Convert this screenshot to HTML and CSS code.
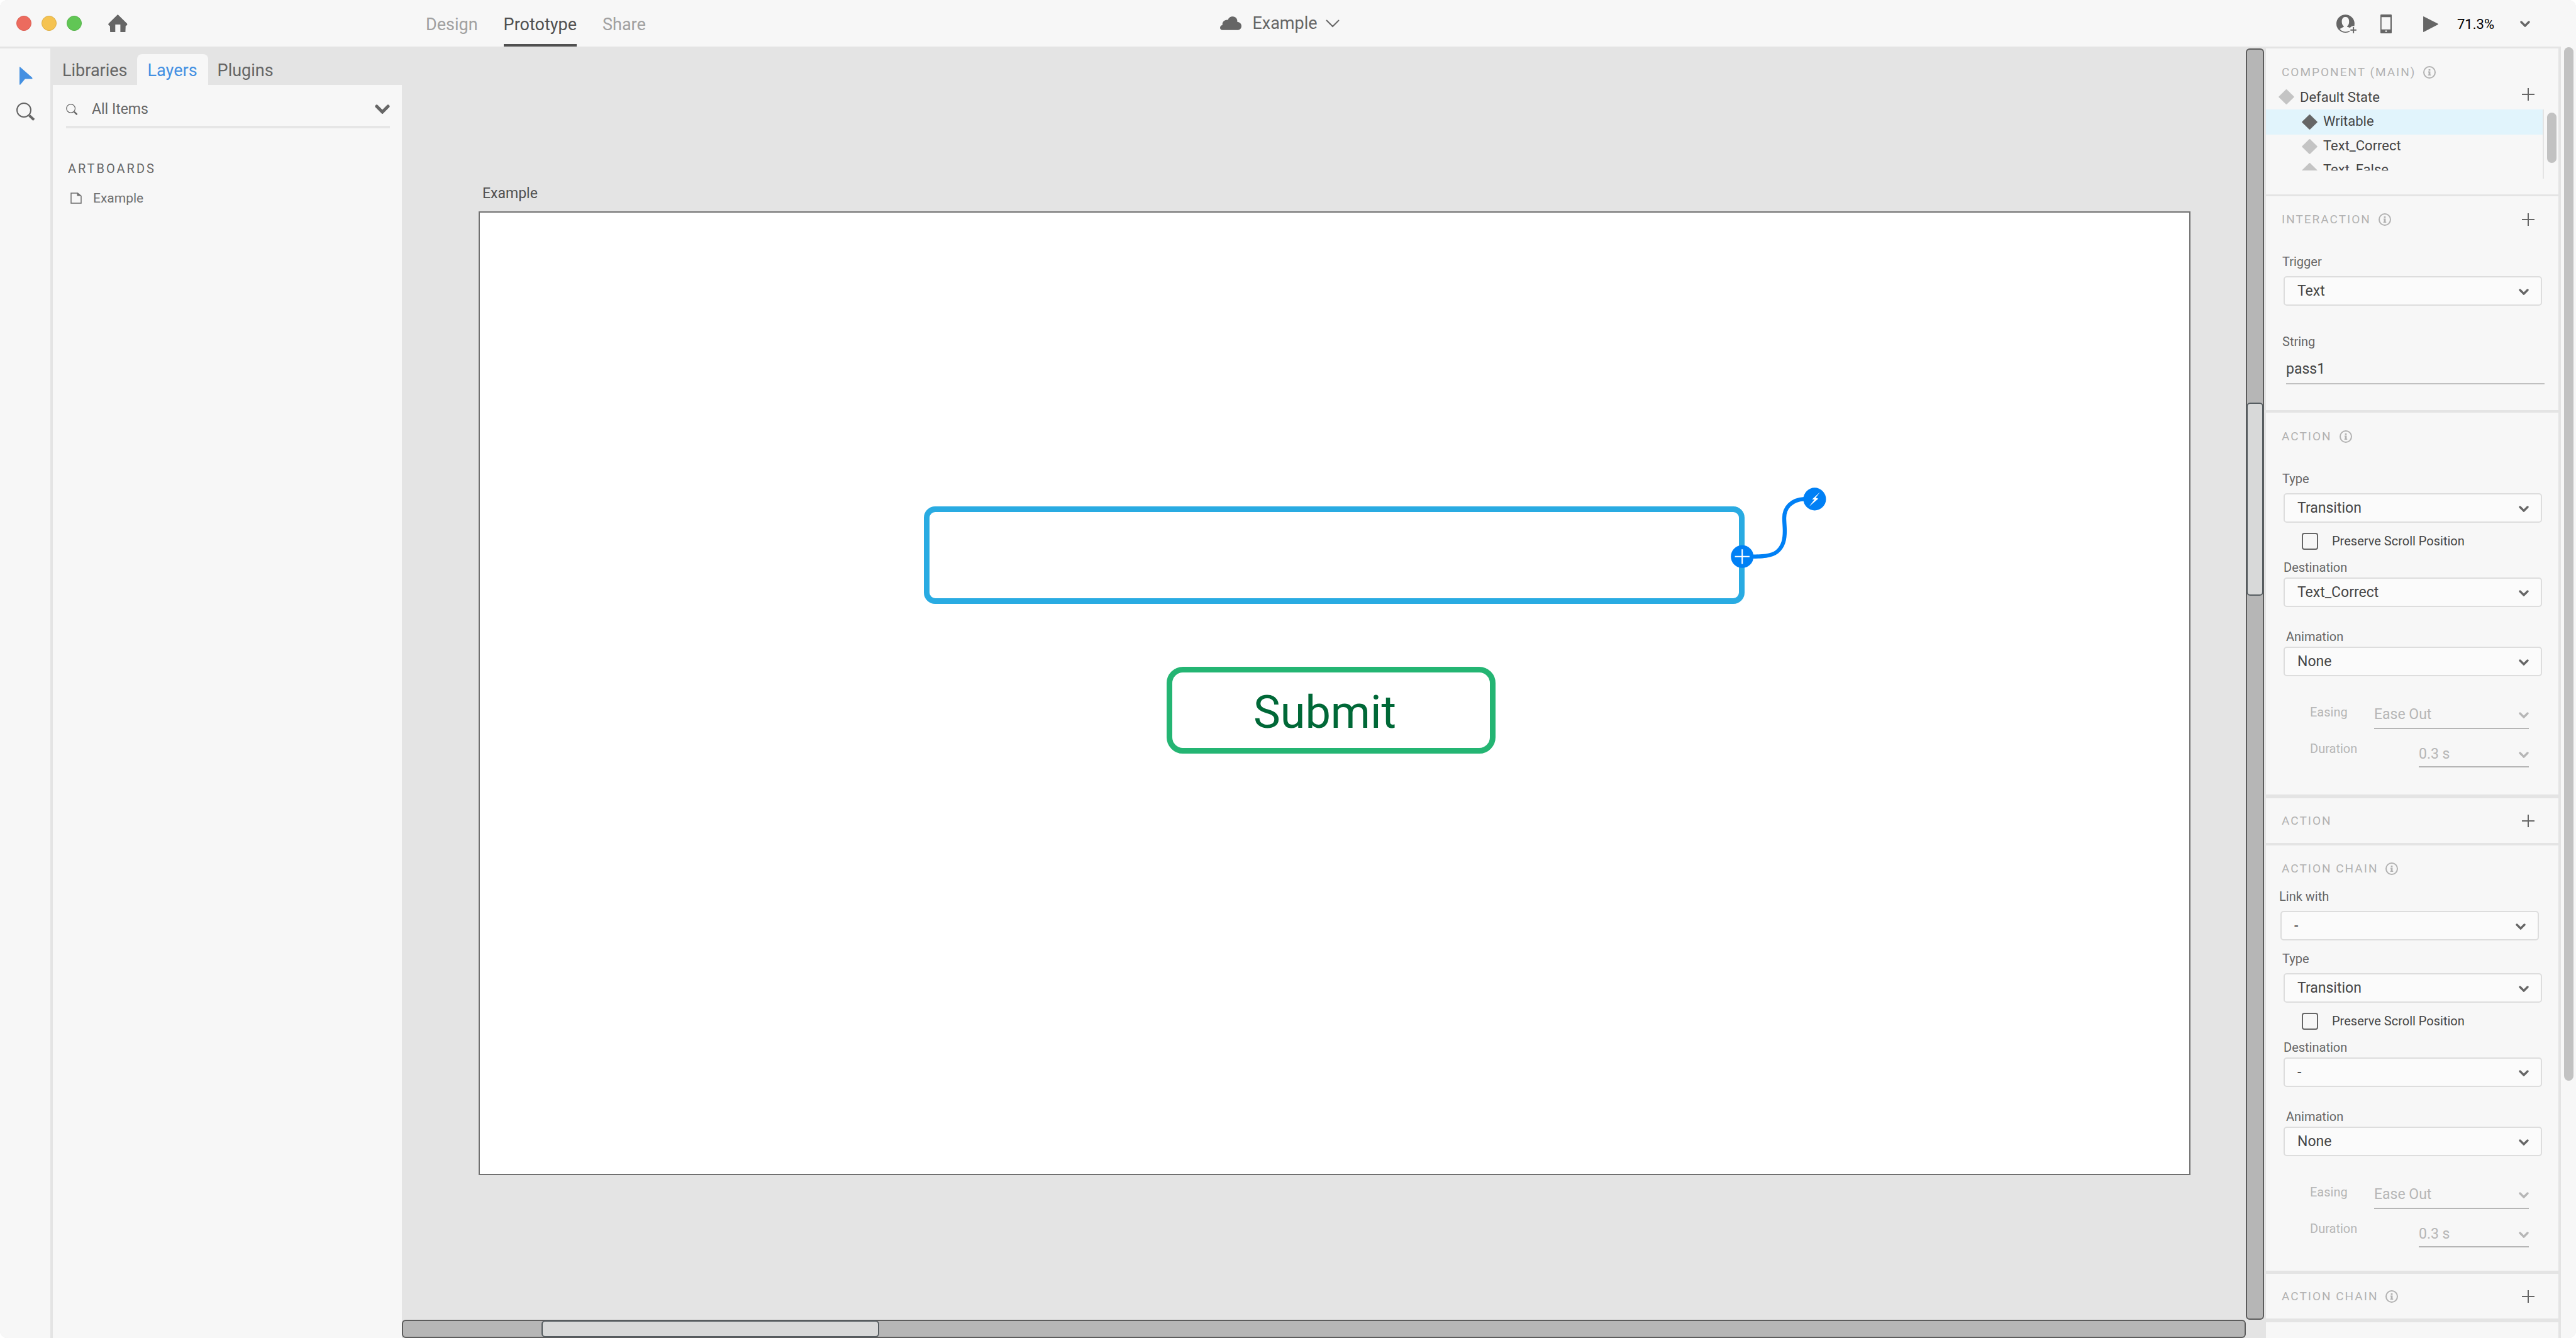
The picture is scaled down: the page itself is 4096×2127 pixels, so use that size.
FILE: index.html
```html
<!DOCTYPE html>
<html lang="en">
<head>
<meta charset="utf-8">
<title>Example</title>
<link rel="stylesheet" href="styles.css">
</head>
<body>
<svg class="sprite" aria-hidden="true">
  <symbol id="i-search" viewBox="0 0 30 29"><circle cx="12" cy="12" r="11" fill="none" stroke="currentColor" stroke-width="2"/><path d="M20.500 20.500 28 27.500" stroke="currentColor" stroke-width="4" fill="none"/></symbol>
  <symbol id="i-chevron" viewBox="0 0 16 10"><path d="M2 2 8 8 14 2" fill="none" stroke="currentColor" stroke-width="3.400" stroke-linecap="round"/></symbol>
  <symbol id="i-chevron-thin" viewBox="0 0 22 13"><path d="M1.500 1.500 11 11 20.500 1.500" fill="none" stroke="currentColor" stroke-width="2" stroke-linecap="round"/></symbol>
  <symbol id="i-plus" viewBox="0 0 20 20"><path d="M10 0V20M0 10H20" fill="none" stroke="currentColor" stroke-width="2"/></symbol>
  <symbol id="i-diamond" viewBox="0 0 25 24"><path d="M11.600.4q.9-.8 1.800 0L24.400 11.200q.8.800 0 1.600L13.400 23.600q-.9.800-1.800 0L.6 12.800q-.8-.8 0-1.600z" fill="currentColor"/></symbol>
  <symbol id="i-info" viewBox="0 0 20 20"><circle cx="10" cy="10" r="9" fill="none" stroke="currentColor" stroke-width="2"/><path d="M8.600 5h2.800v2.400H8.600zM8 8.600h3.400v4.800h.9V15H7.700v-1.600h.9V10.200H8z" fill="currentColor"/></symbol>
</svg>

<div class="app">
  <header class="topbar">
    <div class="topbar-left">
      <div class="window-controls">
        <button class="dot dot-close" aria-label="Close"></button>
        <button class="dot dot-min" aria-label="Minimize"></button>
        <button class="dot dot-max" aria-label="Zoom"></button>
        <button class="icon-btn home" aria-label="Home"><svg width="31" height="28" viewBox="0 0 31 28"><path fill="currentColor" d="M15.300 0 29.800 14.300Q31 15.600 29.800 16.900 28.900 17.800 27.800 17.900L27.400 28H19.400V16H11.300V28H3.200L2.800 17.900Q1.700 17.800.8 16.900-.4 15.600.8 14.300Z"/></svg></button>
      </div>
      <nav class="modes">
        <a href="#design">Design</a>
        <a href="#prototype" class="active">Prototype</a>
        <a href="#share">Share</a>
      </nav>
    </div>
    <button class="doc-title">
      <svg width="34" height="22" viewBox="192 147 193 123"><path fill="currentColor" d="M211 270C199 269 192 259 192 248 192 236 201 226 214 226 208 198 232 174 264 178 268 158 285 147 307 147 333 147 350 167 348 197 368 197 385 212 385 233 385 255 371 270 348 270Z"/></svg>
      <span>Example</span>
      <svg class="caret" width="22" height="13"><use href="#i-chevron-thin"/></svg>
    </button>
    <div class="tools">
      <button class="icon-btn" aria-label="Invite"><svg width="32" height="30" viewBox="68 46 182 170"><circle cx="150" cy="129" r="82" fill="currentColor"/><path class="cut" d="M150 69C128 69 117 84 117 111 117 131 125 144 135 151V157L99 176C115 196 132 202 150 202 170 202 186 196 204 180L196 168 165 157V151C176 144 183 131 183 111 183 84 172 69 150 69Z"/><circle class="cut" cx="222" cy="187" r="37"/><path fill="currentColor" d="M217 159h11v22h21v11h-21v23h-11v-23h-22v-11h22z"/></svg></button>
      <button class="icon-btn phone" aria-label="Device preview"><svg width="18" height="30" viewBox="464 42 103 171"><rect x="464" y="42" width="103" height="171" rx="7" fill="currentColor"/><path class="cut" d="M474 66h81v111h-81zM509 188h13v13h-13z"/></svg></button>
      <button class="icon-btn play" aria-label="Play"><svg width="24" height="25" viewBox="853 58 133 139"><path fill="currentColor" d="M853 63q0-6 5-4L984 124q4 3 0 6L858 196q-5 2-5-3Z"/></svg></button>
      <button class="zoom">71.3% <svg width="16" height="10"><use href="#i-chevron"/></svg></button>
    </div>
  </header>

  <main class="main">
    <div class="toolbar">
      <button class="icon-btn select-tool" aria-label="Select"><svg width="21" height="29" viewBox="0 0 21 29"><path fill="currentColor" d="M0 1Q0-.4 1 .6L19.800 17Q20.800 18 20.400 19.500H9.500Q8.500 19.500 8 20.500L1.400 28.400Q.2 29.400 0 28Z"/></svg></button>
      <button class="icon-btn" aria-label="Zoom tool"><svg width="30" height="29"><use href="#i-search"/></svg></button>
    </div>

    <aside class="left">
      <div class="tabs" role="tablist">
        <button role="tab">Libraries</button>
        <button role="tab" class="active" aria-selected="true">Layers</button>
        <button role="tab">Plugins</button>
      </div>
      <div class="layers">
        <div class="search">
          <svg width="19" height="18"><use href="#i-search"/></svg>
          <input type="text" value="All Items" aria-label="Filter layers">
          <button class="icon-btn" aria-label="Filter options"><svg width="24" height="15"><use href="#i-chevron"/></svg></button>
        </div>
        <h2>ARTBOARDS</h2>
        <a class="layer" href="#example"><svg width="18" height="18" viewBox="0 0 18 18"><path d="M1 1H11.500L17 5.500V17H1Z" fill="none" stroke="currentColor" stroke-width="1.500"/><path d="M10.500.5V5.500H17.500Z" fill="currentColor"/></svg>Example</a>
      </div>
    </aside>

    <section class="workspace">
      <div class="canvas">
        <span class="artboard-name">Example</span>
        <div class="artboard">
          <input class="mock-input" type="text" aria-label="Answer">
          <button class="mock-submit">Submit</button>
          <svg class="wire" width="152" height="129" viewBox="284 190 860 730">
            <path d="M480 811C560 810 650 808 700 768 760 718 770 650 770 580 770 540 765 500 765 465 765 370 830 299 945 293" fill="none" stroke="#0080f5" stroke-width="36"/>
            <circle cx="387" cy="811" r="102" fill="#0080f5"/>
            <path d="M387 746V877M321 811H453" stroke="#fff" stroke-width="12"/>
            <circle cx="1039" cy="294" r="102" fill="#0080f5"/>
            <path d="M1087 231 1015 297H1038L990 360 1072 290 1048 282Z" fill="#fff"/>
          </svg>
        </div>
      </div>
      <div class="track track-v"><div class="grip grip-v"></div></div>
      <div class="track track-h"><div class="grip grip-h"></div></div>
    </section>

    <aside class="inspector">
      <section class="panel component">
        <div class="head"><h2>COMPONENT (MAIN)</h2><svg width="20" height="20"><use href="#i-info"/></svg></div>
        <div class="state root"><svg width="25" height="24"><use href="#i-diamond"/></svg>Default State<button class="icon-btn add" aria-label="Add state"><svg width="20" height="20"><use href="#i-plus"/></svg></button></div>
        <div class="states">
          <div class="state-frame">
            <ul class="state-list">
              <li class="state current"><svg width="25" height="24"><use href="#i-diamond"/></svg><span>Writable</span></li>
              <li class="state"><svg width="25" height="24"><use href="#i-diamond"/></svg><span>Text_Correct</span></li>
              <li class="state"><svg width="25" height="24"><use href="#i-diamond"/></svg><span>Text_False</span></li>
            </ul>
          </div>
          <div class="thumb"></div>
        </div>
      </section>

      <section class="panel interaction">
        <div class="head"><h2>INTERACTION</h2><svg width="20" height="20"><use href="#i-info"/></svg><button class="icon-btn add" aria-label="Add interaction"><svg width="20" height="20"><use href="#i-plus"/></svg></button></div>
        <div class="field first"><label for="trigger">Trigger</label>
          <div class="pick"><select id="trigger"><option>Text</option></select><svg width="16" height="10"><use href="#i-chevron"/></svg></div></div>
        <div class="field string"><label for="string">String</label><input id="string" type="text" value="pass1"></div>
      </section>

      <section class="panel action">
        <div class="head"><h2>ACTION</h2><svg width="20" height="20"><use href="#i-info"/></svg></div>
        <div class="field first"><label for="type1">Type</label>
          <div class="pick"><select id="type1"><option>Transition</option></select><svg width="16" height="10"><use href="#i-chevron"/></svg></div></div>
        <label class="check"><input type="checkbox">Preserve Scroll Position</label>
        <div class="field tight"><label for="dest1">Destination</label>
          <div class="pick"><select id="dest1"><option>Text_Correct</option></select><svg width="16" height="10"><use href="#i-chevron"/></svg></div></div>
        <div class="field tight animation"><label for="anim1">Animation</label>
          <div class="pick"><select id="anim1"><option>None</option></select><svg width="16" height="10"><use href="#i-chevron"/></svg></div></div>
        <div class="line easing"><label for="ease1">Easing</label>
          <div class="pick"><select id="ease1" disabled><option>Ease Out</option></select><svg width="16" height="10"><use href="#i-chevron"/></svg></div></div>
        <div class="line duration"><label for="dur1">Duration</label>
          <div class="pick"><select id="dur1" disabled><option>0.3 s</option></select><svg width="16" height="10"><use href="#i-chevron"/></svg></div></div>
      </section>

      <section class="panel short">
        <div class="head"><h2>ACTION</h2><button class="icon-btn add" aria-label="Add action"><svg width="20" height="20"><use href="#i-plus"/></svg></button></div>
      </section>

      <section class="panel chain">
        <div class="head"><h2>ACTION CHAIN</h2><svg width="20" height="20"><use href="#i-info"/></svg></div>
        <div class="field link"><label for="link">Link with</label>
          <div class="pick"><select id="link"><option>-</option></select><svg width="16" height="10"><use href="#i-chevron"/></svg></div></div>
        <div class="field type"><label for="type2">Type</label>
          <div class="pick"><select id="type2"><option>Transition</option></select><svg width="16" height="10"><use href="#i-chevron"/></svg></div></div>
        <label class="check"><input type="checkbox">Preserve Scroll Position</label>
        <div class="field tight"><label for="dest2">Destination</label>
          <div class="pick"><select id="dest2"><option>-</option></select><svg width="16" height="10"><use href="#i-chevron"/></svg></div></div>
        <div class="field tight animation"><label for="anim2">Animation</label>
          <div class="pick"><select id="anim2"><option>None</option></select><svg width="16" height="10"><use href="#i-chevron"/></svg></div></div>
        <div class="line easing"><label for="ease2">Easing</label>
          <div class="pick"><select id="ease2" disabled><option>Ease Out</option></select><svg width="16" height="10"><use href="#i-chevron"/></svg></div></div>
        <div class="line duration"><label for="dur2">Duration</label>
          <div class="pick"><select id="dur2" disabled><option>0.3 s</option></select><svg width="16" height="10"><use href="#i-chevron"/></svg></div></div>
      </section>

      <section class="panel short">
        <div class="head"><h2>ACTION CHAIN</h2><svg width="20" height="20"><use href="#i-info"/></svg><button class="icon-btn add" aria-label="Add action chain"><svg width="20" height="20"><use href="#i-plus"/></svg></button></div>
      </section>
      <section class="panel rest"></section>
    </aside>

    <div class="page-scroll"><div class="thumb"></div></div>
  </main>
</div>
</body>
</html>
```
FILE: styles.css
```css
* { box-sizing: border-box; margin: 0; padding: 0; }
html, body { height: 100%; }
body { background: #fff; font-family: Roboto, "Liberation Sans", sans-serif; color: #666; }
button, input, select { font: inherit; color: inherit; background: none; border: 0; border-radius: 0; appearance: none; outline: 0; }
button { cursor: pointer; }
a { color: inherit; text-decoration: none; }
ul { list-style: none; }
svg { display: block; flex: none; }
.sprite { position: absolute; width: 0; height: 0; }
.cut { fill: #f7f7f7; }
.icon-btn { display: flex; align-items: center; justify-content: center; }

.app { display: flex; flex-direction: column; height: 100vh; background: #e4e4e4; border-radius: 12px; overflow: hidden; }

/* Top bar */
.topbar { display: grid; grid-template-columns: 1fr auto 1fr; flex: none; height: 74px; padding-right: 26px; background: #f7f7f7; font-size: 27px; }
.topbar-left { display: flex; }
.window-controls { display: flex; align-items: center; gap: 16px; width: 677px; padding-left: 26px; }
.dot { width: 24px; height: 24px; border-radius: 50%; }
.dot-close { background: #ec6b5e; border: 1px solid #dc5f53; }
.dot-min { background: #f5c351; border: 1px solid #ddae45; }
.dot-max { background: #61c655; border: 1px solid #55b24a; }
.home { margin-left: 26px; }
.modes { display: flex; gap: 41px; color: #a0a0a0; }
.modes a { display: flex; align-items: center; height: 74px; padding-top: 8px; border-bottom: 4px solid transparent; }
.modes .active { color: #505050; border-color: #505050; }
.doc-title { display: flex; align-items: center; gap: 17px; }
.doc-title .caret { margin-left: -4px; }
.tools { display: flex; align-items: center; justify-content: flex-end; padding: 2px 47px 0 0; }
.phone { margin-left: 38px; }
.play { margin-left: 50px; }
.zoom { display: flex; align-items: center; gap: 41px; margin-left: 30px; font-size: 22px; color: #000; }
.zoom svg { color: #666; }

.main { display: flex; flex: 1; min-height: 0; }

/* Left side */
.toolbar { display: flex; flex-direction: column; align-items: center; gap: 28px; flex: none; width: 80px; margin: 3px 4px 0 0; padding: 29px 0 0 2px; background: #f7f7f7; }
.select-tool { color: #4490e2; }
.left { display: flex; flex-direction: column; flex: none; width: 555px; }
.tabs { display: flex; padding-top: 12px; font-size: 27px; }
.tabs button { height: 49px; padding: 3px 15px 0; }
.tabs .active { padding: 3px 17px 0; background: #f7f7f7; border-radius: 8px 8px 0 0; color: #4490e2; }
.layers { flex: 1; padding: 0 19px 0 21px; background: #f7f7f7; }
.search { display: flex; align-items: center; height: 69px; padding-top: 12px; border-bottom: 4px solid #e6e6e6; font-size: 23px; }
.search input { flex: 1; min-width: 0; margin-left: 22px; }
h2 { font-size: 19px; line-height: 24px; font-weight: 400; letter-spacing: 2px; }
.layers h2 { margin: 52px 3px 23px; letter-spacing: 3px; font-size: 20px; }
.layer { display: flex; align-items: center; gap: 18px; padding-left: 7px; font-size: 21px; line-height: 24px; color: #707070; }

/* Canvas */
.workspace { display: grid; grid-template: 1fr 29px / 1fr 29px; flex: 1; min-width: 0; margin-right: 3px; }
.canvas { position: relative; overflow: hidden; }
.artboard-name { position: absolute; left: 128px; top: 220px; font-size: 23px; line-height: 28px; color: #505050; }
.artboard { position: absolute; inset: 262px 88px 230px 122px; background: #fff; border: 2px solid #707070; }
.mock-input { position: absolute; left: 706px; top: 467px; width: 1305px; height: 155px; padding: 0 40px; border: 9px solid #29abe2; border-radius: 18px; font-size: 72px; }
.mock-submit { position: absolute; left: 1092px; top: 722px; width: 523px; height: 138px; padding: 7px 20px 0 0; border: 9px solid #24b573; border-radius: 26px; font-size: 72px; line-height: 84px; color: #006837; }
.wire { position: absolute; left: 1989px; top: 437px; }
.track { position: relative; background: #b6b6b6; border: 2px solid #5c5c5c; border-radius: 6px; }
.track-v { margin-top: 3px; }
.track-h { grid-column: 1; }
.grip { position: absolute; background: #d8d9d9; border: 2px solid #555c60; border-radius: 6px; }
.grip-v { left: -1px; right: -1px; top: 561px; height: 307px; }
.grip-h { top: -1px; bottom: -1px; left: 220px; width: 537px; }

/* Inspector */
.inspector { display: flex; flex-direction: column; flex: none; width: 465px; padding-top: 3px; margin-right: 4px; }
.panel { flex: none; background: #f7f7f7; }
.head { display: flex; align-items: center; gap: 12px; height: 24px; padding: 0 38px 0 25px; color: #b2b2b2; }
.add { margin-left: auto; color: #666; }
.component { padding: 26px 0 25px; margin-bottom: 3px; }
.state { display: flex; align-items: center; gap: 9px; height: 38px; padding-left: 57px; font-size: 22px; color: #464646; }
.state > svg { color: #c4c4c4; }
.state > span { padding-bottom: 3px; }
.state.root { height: 40px; margin-top: 7px; padding: 0 38px 0 20px; }
.state .add { padding-bottom: 8px; }
.state.current { height: 40px; background: #e1f4fc; }
.state.current > svg { color: #666; }
.states { display: flex; justify-content: space-between; padding-right: 3px; }
.state-frame { width: 442px; height: 110px; border-right: 2px solid #e4e4e4; }
.state-list { height: 97px; overflow: hidden; }
.thumb { width: 15px; background: #c2c2c2; border-radius: 8px; }
.states .thumb { height: 80px; margin-top: 5px; }

.interaction { padding: 25px 0 41px; margin-bottom: 4px; }
.action { padding: 26px 0 43px; margin-bottom: 6px; }
.short { padding: 24px 0 23px; margin-bottom: 4px; }
.chain { padding: 25px 0 37px; margin-bottom: 5px; }
.short ~ .short { margin-bottom: 6px; }
.rest { flex: 1; }

.field { padding: 0 26px; }
.field label, .line label { display: block; font-size: 20px; line-height: 24px; }
.field .pick { margin: 11px 0 0 2px; }
.field.tight .pick { margin-top: 4px; }
.first { margin-top: 43px; }
.string { margin-top: 45px; }
.string input { display: block; width: 411px; height: 47px; margin: 9px 0 0 6px; border-bottom: 2px solid #c0c0c0; font-size: 23px; color: #464646; }
.tight { margin-top: 16px; }
.tight label { padding-left: 2px; }
.animation { margin-top: 35px; }
.animation label { padding-left: 6px; }
.link { margin-top: 20px; padding: 0 31px 0 21px; }
.type { margin-top: 17px; }

.pick { position: relative; }
.pick select { display: block; width: 100%; height: 47px; padding: 0 40px 0 20px; background: #fbfbfb; border: 2px solid #ddd; border-radius: 5px; font-size: 23px; color: #464646; }
.pick svg { position: absolute; right: 21px; top: 50%; margin-top: -4px; pointer-events: none; }

.check { display: flex; align-items: center; gap: 22px; height: 28px; margin-top: 15px; padding-left: 57px; font-size: 20px; color: #464646; }
.check input { width: 26px; height: 27px; border: 2px solid #666; border-radius: 4px; }

.line { display: flex; justify-content: space-between; align-items: flex-start; padding: 0 47px 0 70px; color: #b6b6b6; }
.line .pick select { padding: 0; background: none; border: 0; border-bottom: 2px solid #b6b6b6; border-radius: 0; color: #b6b6b6; opacity: 1; }
.line .pick svg { right: 0; }
.easing { margin-top: 38px; }
.easing label { padding-top: 7px; }
.easing .pick { width: 246px; }
.easing .pick select { height: 46px; }
.duration { margin-top: 19px; }
.duration .pick { width: 175px; }
.duration .pick select { height: 42px; }

.page-scroll { flex: none; width: 24px; padding: 1px 4px 0 5px; background: #f7f7f7; }
.page-scroll .thumb { height: 1643px; }
```
